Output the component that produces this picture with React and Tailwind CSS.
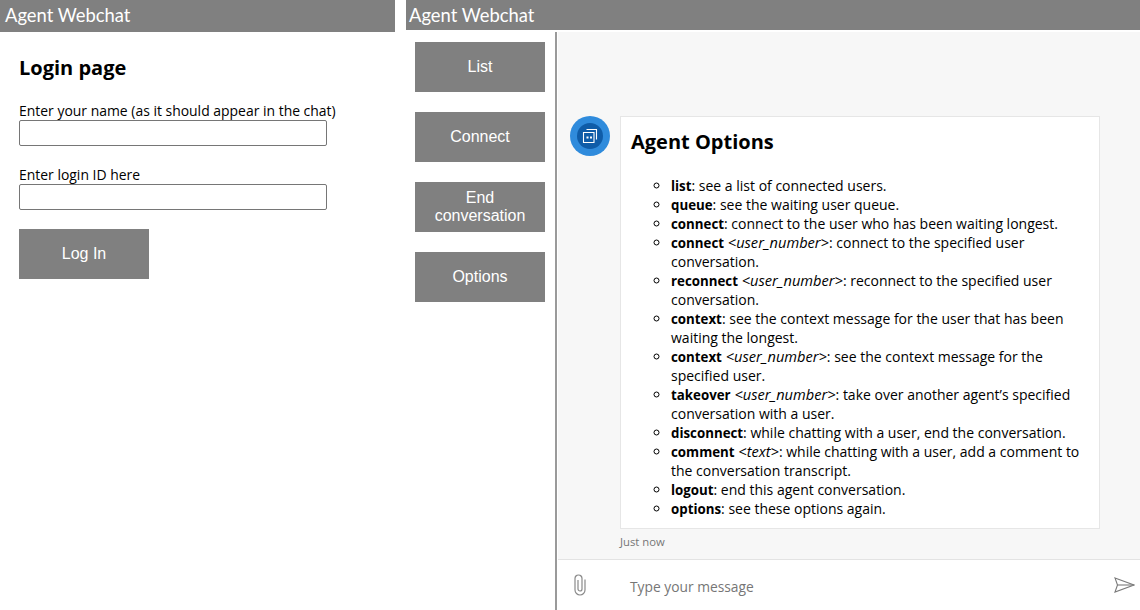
import React from 'react';

const options = [
  { name: 'list', text: ': see a list of connected users.' },
  { name: 'queue', text: ': see the waiting user queue.' },
  { name: 'connect', text: ': connect to the user who has been waiting longest.' },
  { name: 'connect', arg: '<user_number>', text: ': connect to the specified user conversation.' },
  { name: 'reconnect', arg: '<user_number>', text: ': reconnect to the specified user conversation.' },
  { name: 'context', text: ': see the context message for the user that has been waiting the longest.' },
  { name: 'context', arg: '<user_number>', text: ': see the context message for the specified user.' },
  { name: 'takeover', arg: '<user_number>', text: ': take over another agent’s specified conversation with a user.' },
  { name: 'disconnect', text: ': while chatting with a user, end the conversation.' },
  { name: 'comment', arg: '<text>', text: ': while chatting with a user, add a comment to the conversation transcript.' },
  { name: 'logout', text: ': end this agent conversation.' },
  { name: 'options', text: ': see these options again.' },
];

const GrayButton = ({ children, className = '' }) => (
  <button
    type="button"
    className={`flex h-[50px] w-[130px] items-center justify-center bg-[#808080] px-4 text-center text-[16px] leading-[18px] text-white [font-family:'Liberation_Sans',sans-serif] ${className}`}
  >
    {children}
  </button>
);

const Header = ({ className = '' }) => (
  <div className={`flex items-center bg-[#808080] text-[18.4px] text-white [font-family:'Lato',sans-serif] ${className}`}>
    Agent Webchat
  </div>
);

const BotAvatar = () => (
  <div className="flex h-10 w-10 shrink-0 items-center justify-center rounded-full bg-[#2f8bdc]">
    <div className="flex h-[26px] w-[26px] items-center justify-center rounded-full bg-[#0f5ca8]">
      <svg width="16" height="16" viewBox="0 0 16 16" fill="none" stroke="white" strokeWidth="1.1">
        <path d="M4.5 1.5H14.5V11.5" />
        <path d="M12 4.5H1.5V14.5H12Z" />
        <path d="M4.5 9.5H6.5M8 9.5H10" strokeWidth="2" />
      </svg>
    </div>
  </div>
);

const ClipIcon = () => (
  <svg width="12" height="22" viewBox="0 0 12 22" fill="none" stroke="#8a8a8a" strokeWidth="1.2">
    <path d="M11 5.5V16A5 5 0 0 1 1 16V4.5A3.5 3.5 0 0 1 8 4.5V15A2 2 0 0 1 4 15V6" />
  </svg>
);

const SendIcon = () => (
  <svg width="21" height="16" viewBox="0 0 21 16" fill="none" stroke="#7a7a7a" strokeWidth="1.1">
    <path d="M1 1L20 8L1 15L3.5 8Z" />
    <path d="M3.5 8H20" />
  </svg>
);

const LoginPanel = () => (
  <div className="w-[395px] shrink-0">
    <Header className="h-8 pl-[5px]" />
    <div className="px-[19px] text-[14px] text-black [font-family:'Open_Sans',sans-serif]">
      <h1 className="mt-[22px] text-[20px] leading-[28px] font-bold">Login page</h1>
      <label className="mt-[21px] block text-[13.95px] leading-[16px]">Enter your name (as it should appear in the chat)</label>
      <input className="mt-[1px] block h-[26px] w-[308px] rounded-[2px] border border-[#767676] bg-white" />
      <label className="mt-[21px] block text-[13.95px] leading-[16px]">Enter login ID here</label>
      <input className="mt-[1px] block h-[26px] w-[308px] rounded-[2px] border border-[#767676] bg-white" />
      <GrayButton className="mt-[19px]">Log In</GrayButton>
    </div>
  </div>
);

const ChatPanel = () => (
  <div className="ml-[11px] flex min-w-0 flex-1 flex-col [font-family:'Open_Sans',sans-serif]">
    <Header className="h-[30px] pt-px pl-[3px]" />
    <div className="flex min-h-0 flex-1">
      <div className="flex w-[149px] shrink-0 flex-col gap-5 pt-3 pl-[9px]">
        <GrayButton>List</GrayButton>
        <GrayButton>Connect</GrayButton>
        <GrayButton>End conversation</GrayButton>
        <GrayButton>Options</GrayButton>
      </div>
      <div className="mt-[2px] flex min-w-0 flex-1 flex-col border-l-[2px] border-[#9a9a9a] pl-px">
        <div className="flex min-h-0 flex-1 flex-col justify-end bg-[#f7f7f7] pb-[10px] pl-3">
          <div className="flex items-start gap-[10px]">
            <BotAvatar />
            <div className="w-[480px] border border-[#e6e6e6] bg-white px-[10px] pt-[11px] pb-[10px] text-[14px] leading-[19px] text-black">
              <h2 className="text-[20px] leading-[28px] font-bold">Agent Options</h2>
              <ul className="mt-[20px] list-[circle] pl-10">
                {options.map((item, index) => (
                  <li key={index}>
                    <b className="text-[13.3px] leading-none">{item.name}</b>
                    {item.arg && <i className="text-[14.6px] leading-none"> {item.arg}</i>}
                    {item.text}
                  </li>
                ))}
              </ul>
            </div>
          </div>
          <div className="mt-[6px] pl-[50px] text-[11.3px] leading-[14px] text-[#767676]">Just now</div>
        </div>
        <div className="flex h-[51px] shrink-0 items-center border-t border-[#e3e3e3] bg-white pr-[5px] pl-[16px] text-[13.8px] text-[#767676]">
          <ClipIcon />
          <span className="mt-[5px] ml-[44px] flex-1">Type your message</span>
          <SendIcon />
        </div>
      </div>
    </div>
  </div>
);

const App = () => (
  <div className="flex h-[610px] w-[1140px] overflow-hidden bg-white">
    <LoginPanel />
    <ChatPanel />
  </div>
);

export default App;
